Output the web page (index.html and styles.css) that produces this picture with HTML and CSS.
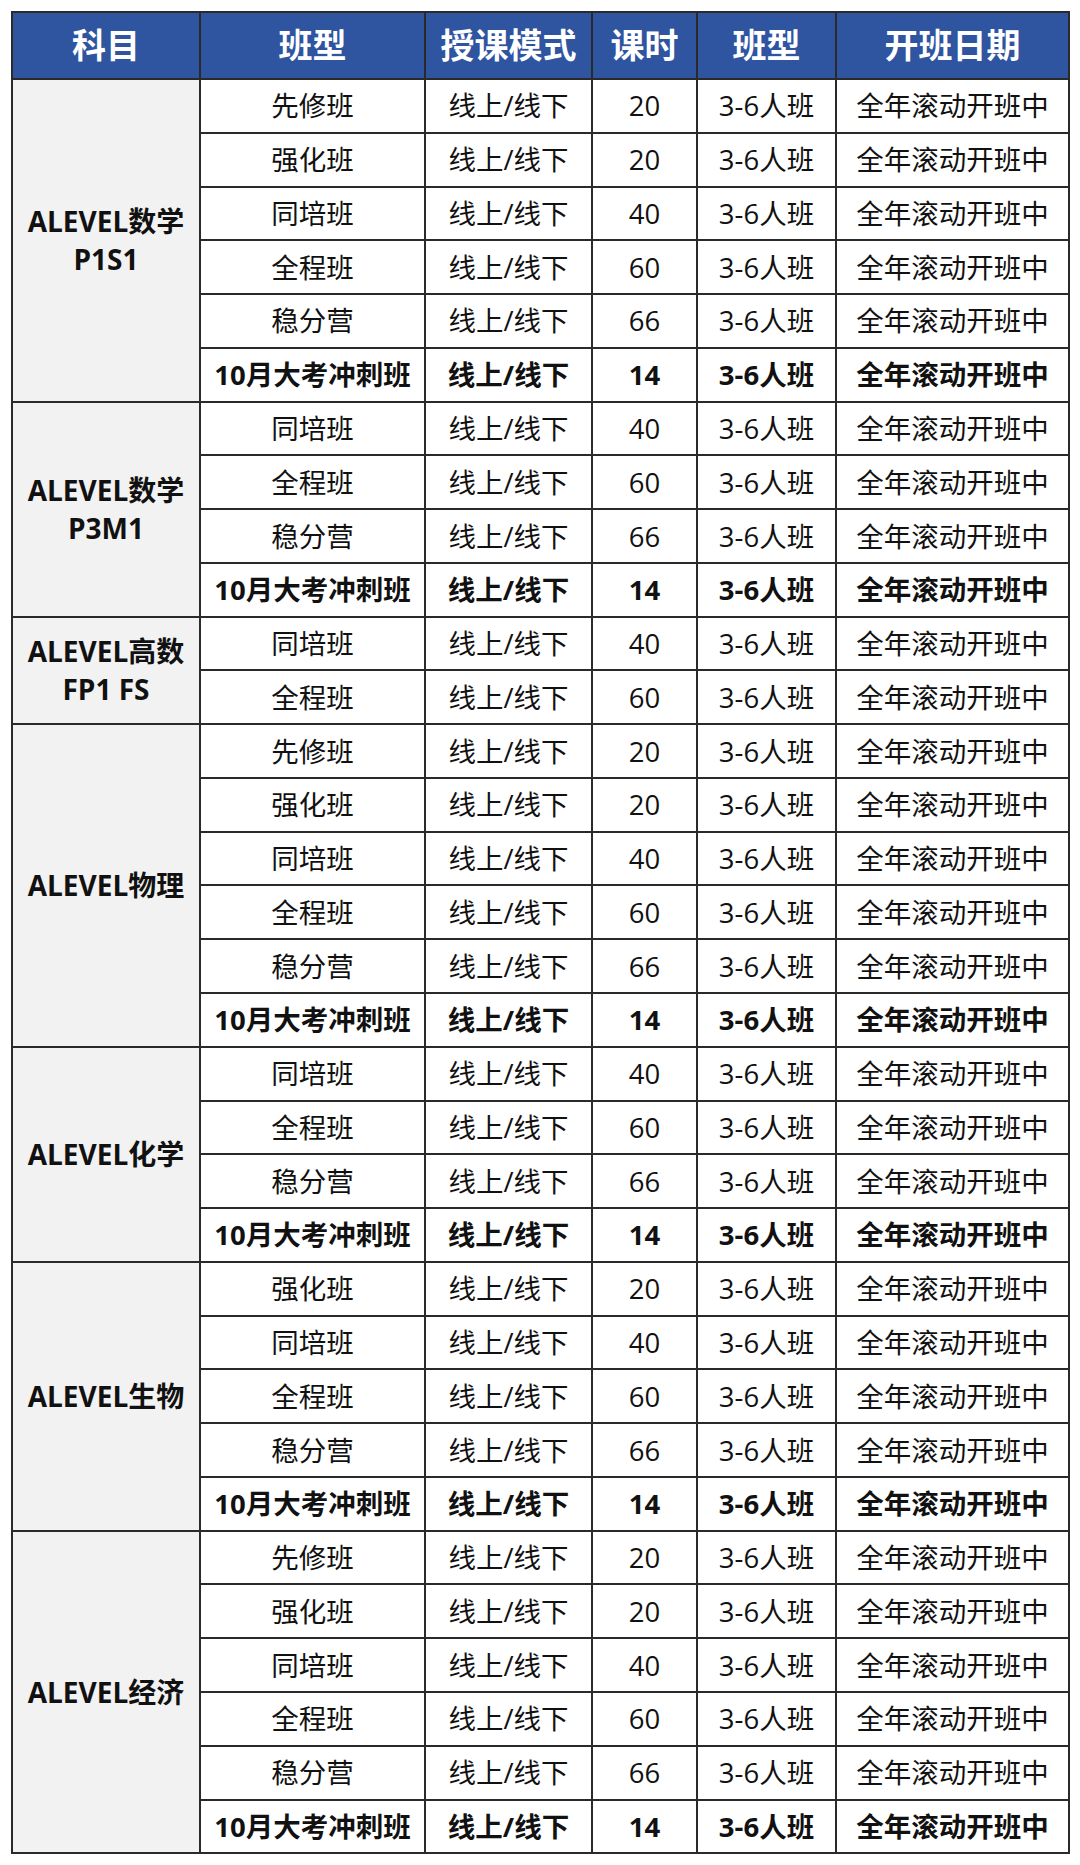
FILE: index.html
```html
<!DOCTYPE html>
<html lang="zh-CN">
<head>
<meta charset="utf-8">
<title>ALEVEL课程</title>
<link rel="stylesheet" href="styles.css">
</head>
<body>
<table class="course-table">
  <colgroup>
    <col class="c1"><col class="c2"><col class="c3"><col class="c4"><col class="c5"><col class="c6">
  </colgroup>
  <thead>
    <tr><th>科目</th><th>班型</th><th>授课模式</th><th>课时</th><th>班型</th><th>开班日期</th></tr>
  </thead>
  <tbody>
    <tr><td class="subj" rowspan="6">ALEVEL数学<br>P1S1</td><td>先修班</td><td>线上/线下</td><td>20</td><td>3-6人班</td><td>全年滚动开班中</td></tr>
    <tr><td>强化班</td><td>线上/线下</td><td>20</td><td>3-6人班</td><td>全年滚动开班中</td></tr>
    <tr><td>同培班</td><td>线上/线下</td><td>40</td><td>3-6人班</td><td>全年滚动开班中</td></tr>
    <tr><td>全程班</td><td>线上/线下</td><td>60</td><td>3-6人班</td><td>全年滚动开班中</td></tr>
    <tr><td>稳分营</td><td>线上/线下</td><td>66</td><td>3-6人班</td><td>全年滚动开班中</td></tr>
    <tr class="bold"><td>10月大考冲刺班</td><td>线上/线下</td><td>14</td><td>3-6人班</td><td>全年滚动开班中</td></tr>

    <tr><td class="subj" rowspan="4">ALEVEL数学<br>P3M1</td><td>同培班</td><td>线上/线下</td><td>40</td><td>3-6人班</td><td>全年滚动开班中</td></tr>
    <tr><td>全程班</td><td>线上/线下</td><td>60</td><td>3-6人班</td><td>全年滚动开班中</td></tr>
    <tr><td>稳分营</td><td>线上/线下</td><td>66</td><td>3-6人班</td><td>全年滚动开班中</td></tr>
    <tr class="bold"><td>10月大考冲刺班</td><td>线上/线下</td><td>14</td><td>3-6人班</td><td>全年滚动开班中</td></tr>

    <tr><td class="subj" rowspan="2">ALEVEL高数<br>FP1 FS</td><td>同培班</td><td>线上/线下</td><td>40</td><td>3-6人班</td><td>全年滚动开班中</td></tr>
    <tr><td>全程班</td><td>线上/线下</td><td>60</td><td>3-6人班</td><td>全年滚动开班中</td></tr>

    <tr><td class="subj" rowspan="6">ALEVEL物理</td><td>先修班</td><td>线上/线下</td><td>20</td><td>3-6人班</td><td>全年滚动开班中</td></tr>
    <tr><td>强化班</td><td>线上/线下</td><td>20</td><td>3-6人班</td><td>全年滚动开班中</td></tr>
    <tr><td>同培班</td><td>线上/线下</td><td>40</td><td>3-6人班</td><td>全年滚动开班中</td></tr>
    <tr><td>全程班</td><td>线上/线下</td><td>60</td><td>3-6人班</td><td>全年滚动开班中</td></tr>
    <tr><td>稳分营</td><td>线上/线下</td><td>66</td><td>3-6人班</td><td>全年滚动开班中</td></tr>
    <tr class="bold"><td>10月大考冲刺班</td><td>线上/线下</td><td>14</td><td>3-6人班</td><td>全年滚动开班中</td></tr>

    <tr><td class="subj" rowspan="4">ALEVEL化学</td><td>同培班</td><td>线上/线下</td><td>40</td><td>3-6人班</td><td>全年滚动开班中</td></tr>
    <tr><td>全程班</td><td>线上/线下</td><td>60</td><td>3-6人班</td><td>全年滚动开班中</td></tr>
    <tr><td>稳分营</td><td>线上/线下</td><td>66</td><td>3-6人班</td><td>全年滚动开班中</td></tr>
    <tr class="bold"><td>10月大考冲刺班</td><td>线上/线下</td><td>14</td><td>3-6人班</td><td>全年滚动开班中</td></tr>

    <tr><td class="subj" rowspan="5">ALEVEL生物</td><td>强化班</td><td>线上/线下</td><td>20</td><td>3-6人班</td><td>全年滚动开班中</td></tr>
    <tr><td>同培班</td><td>线上/线下</td><td>40</td><td>3-6人班</td><td>全年滚动开班中</td></tr>
    <tr><td>全程班</td><td>线上/线下</td><td>60</td><td>3-6人班</td><td>全年滚动开班中</td></tr>
    <tr><td>稳分营</td><td>线上/线下</td><td>66</td><td>3-6人班</td><td>全年滚动开班中</td></tr>
    <tr class="bold"><td>10月大考冲刺班</td><td>线上/线下</td><td>14</td><td>3-6人班</td><td>全年滚动开班中</td></tr>

    <tr><td class="subj" rowspan="6">ALEVEL经济</td><td>先修班</td><td>线上/线下</td><td>20</td><td>3-6人班</td><td>全年滚动开班中</td></tr>
    <tr><td>强化班</td><td>线上/线下</td><td>20</td><td>3-6人班</td><td>全年滚动开班中</td></tr>
    <tr><td>同培班</td><td>线上/线下</td><td>40</td><td>3-6人班</td><td>全年滚动开班中</td></tr>
    <tr><td>全程班</td><td>线上/线下</td><td>60</td><td>3-6人班</td><td>全年滚动开班中</td></tr>
    <tr><td>稳分营</td><td>线上/线下</td><td>66</td><td>3-6人班</td><td>全年滚动开班中</td></tr>
    <tr class="bold"><td>10月大考冲刺班</td><td>线上/线下</td><td>14</td><td>3-6人班</td><td>全年滚动开班中</td></tr>
  </tbody>
</table>
</body>
</html>
```
FILE: styles.css
```css
html, body {
  margin: 0;
  background: #ffffff;
}
body {
  padding: 11px 0 0 11px;
  font-family: "Open Sans", "Noto Sans CJK SC", sans-serif;
  color: #111111;
}
.course-table {
  border-collapse: collapse;
  width: 1057px;
  table-layout: fixed;
}
.c1 { width: 188px; }
.c2 { width: 225px; }
.c3 { width: 167px; }
.c4 { width: 105px; }
.c5 { width: 139px; }
.c6 { width: 233px; }
.course-table th,
.course-table td {
  border: 2px solid #2a2a2a;
  text-align: center;
  vertical-align: middle;
  padding: 0;
  white-space: nowrap;
}
.course-table th {
  background: #2f54a0;
  color: #ffffff;
  font-size: 34px;
  font-weight: 700;
  height: 65px;
  line-height: 1.2;
}
.course-table td {
  font-size: 27.5px;
  height: 51.77px;
  line-height: 1.2;
}
.course-table td.subj {
  background: #f2f2f2;
  font-weight: 700;
  font-size: 28px;
  line-height: 38px;
}
.course-table tr.bold td {
  font-weight: 700;
}
```
